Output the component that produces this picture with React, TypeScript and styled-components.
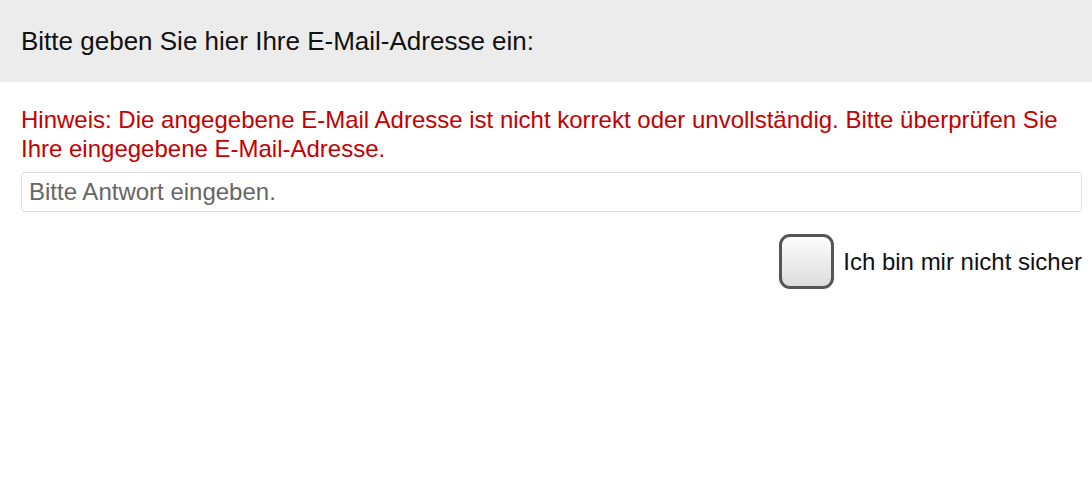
import React from "react";
import styled, { createGlobalStyle } from "styled-components";

const Global = createGlobalStyle`
  html, body { margin: 0; padding: 0; background: #fff; }
  body { font-family: "Liberation Sans", Arial, sans-serif; }
`;

const Page = styled.div`
  display: flex;
  flex-direction: column;
`;

const Header = styled.div`
  background: #ececec;
  height: 82px;
  display: flex;
  align-items: center;
  padding: 0 21px;
  font-size: 26px;
  color: #111;
`;

const Body = styled.div`
  padding: 23px 10px 0 21px;
  display: flex;
  flex-direction: column;
`;

const Hint = styled.div`
  color: #c40000;
  font-size: 24px;
  line-height: 29px;
`;

const Input = styled.input`
  margin-top: 9px;
  height: 40px;
  box-sizing: border-box;
  border: 1px solid #dedede;
  border-radius: 4px;
  padding: 0 7px;
  font-family: "Liberation Sans", Arial, sans-serif;
  font-size: 24px;
  color: #333;
  &::placeholder { color: #666; }
  outline: none;
`;

const Option = styled.label`
  margin-top: 22px;
  align-self: flex-end;
  display: flex;
  align-items: center;
  gap: 9px;
  font-size: 24px;
  color: #111;
`;

const Box = styled.span`
  width: 55px;
  height: 55px;
  box-sizing: border-box;
  border: 3px solid #555;
  border-radius: 11px;
  background: linear-gradient(#fdfdfd, #dcdcdc);
`;

export default function App() {
  return (
    <Page>
      <Global />
      <Header>Bitte geben Sie hier Ihre E-Mail-Adresse ein:</Header>
      <Body>
        <Hint>
          Hinweis: Die angegebene E-Mail Adresse ist nicht korrekt oder unvollständig. Bitte überprüfen Sie Ihre eingegebene E-Mail-Adresse.
        </Hint>
        <Input placeholder="Bitte Antwort eingeben." />
        <Option>
          <Box />
          Ich bin mir nicht sicher
        </Option>
      </Body>
    </Page>
  );
}
